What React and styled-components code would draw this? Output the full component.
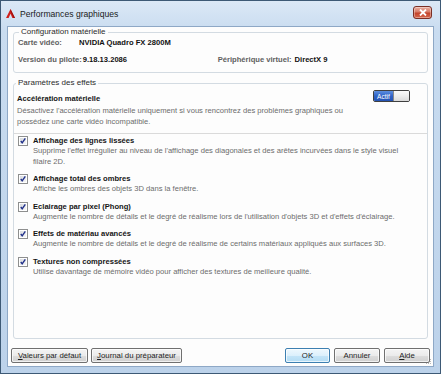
import styled, { createGlobalStyle } from 'styled-components';

const GlobalStyle = createGlobalStyle`
    html, body {
        margin: 0;
        padding: 0;
        background: #ffffff;
    }
    body {
        font-family: "Liberation Sans", Arial, sans-serif;
    }
`;

const Window = styled.div`
    position: relative;
    box-sizing: border-box;
    width: 441px;
    height: 374px;
    display: flex;
    flex-direction: column;
    border: 1px solid #3d5975;
    padding: 0 6px 6px 6px;
    background: linear-gradient(180deg, #dbe8f6 0%, #c9dcf0 8%, #bcd2ea 100%);
`;

const TitleBar = styled.div`
    height: 25px;
    display: flex;
    align-items: center;
    margin: 0 -6px;
    padding: 0 8px 0 5px;
    gap: 5px;
`;

const Title = styled.span`
    flex: 1;
    font-size: 8.6px;
    color: #1b1b1b;
    margin-top: 1px;
`;

const CloseButton = styled.div`
    box-sizing: border-box;
    width: 19px;
    height: 13px;
    margin-top: -2px;
    display: flex;
    align-items: center;
    justify-content: center;
    border: 1px solid #7a2f25;
    border-radius: 3px;
    background: linear-gradient(180deg, #eab0a2 0%, #d77a66 45%, #c2432b 55%, #d7684d 100%);
    box-shadow: inset 0 0 0 1px rgba(255, 255, 255, 0.35);
`;

const Client = styled.div`
    flex: 1;
    display: flex;
    flex-direction: column;
    box-sizing: border-box;
    border: 1px solid #8ea8c6;
    background: #fdfdfd;
    padding: 0 3px 3px 3px;
    font-size: 7.6px;
    color: #1e1e1e;
`;

const GroupBox = styled.fieldset`
    margin: 0 2px;
    padding: ${(p) => p.$pad};
    border: 1px solid #d3dbe2;
    border-radius: 3px;
    min-width: 0;
    display: flex;
    flex-direction: column;
    flex: ${(p) => (p.$grow ? 1 : 'none')};
    & + & {
        margin-top: 5px;
    }
`;

const Legend = styled.legend`
    font-size: 8px;
    line-height: 10px;
    color: #2b2b2b;
    padding: 0 2px;
    margin-left: 1px;
`;

const InfoRow = styled.div`
    display: flex;
    align-items: center;
    line-height: 10px;
    white-space: nowrap;
    & + & {
        margin-top: 7px;
    }
`;

const InfoLabel = styled.span`
    min-width: ${(p) => p.$width || '0'};
    flex: none;
    font-weight: bold;
    color: #606060;
    margin-right: ${(p) => p.$gap || '1px'};
`;

const InfoValue = styled.span`
    width: ${(p) => p.$width || 'auto'};
    flex: none;
    font-weight: bold;
    color: #111;
`;

const AccelBlock = styled.div`
    display: flex;
    align-items: flex-start;
    padding: 0 17px 6px 2px;
    border-bottom: 1px solid #dadada;
    margin: 0 -1px 0 -1px;
`;

const AccelText = styled.div`
    flex: 1;
    padding-left: 1px;
`;

const ItemTitle = styled.div`
    font-weight: bold;
    line-height: 11px;
    color: #151515;
`;

const Desc = styled.div`
    line-height: 10.5px;
    color: #6c6c6c;
    padding-right: 14px;
`;

const AccelDesc = styled(Desc)`
    margin-top: 1px;
    line-height: 11px;
`;

const Toggle = styled.div`
    box-sizing: border-box;
    width: 37px;
    height: 12px;
    margin-top: -3px;
    display: flex;
    border: 1px solid #404040;
    border-radius: 2px;
    overflow: hidden;
`;

const ToggleOn = styled.div`
    width: 19px;
    display: flex;
    align-items: center;
    justify-content: center;
    color: #ffffff;
    font-size: 6.6px;
    background: linear-gradient(180deg, #5d8fe0 0%, #2f62c6 50%, #2453b3 100%);
`;

const ToggleKnob = styled.div`
    flex: 1;
    border-left: 1px solid #8a8a8a;
    background: linear-gradient(180deg, #fafafa 0%, #ececec 50%, #d9d9d9 100%);
`;

const ItemList = styled.div`
    display: flex;
    flex-direction: column;
    gap: 6px;
    padding: 1px 0 0 3px;
`;

const Item = styled.div`
    display: flex;
    gap: 5px;
`;

const CheckSlot = styled.div`
    width: 10px;
    flex: none;
    padding-top: 1px;
`;

const Footer = styled.div`
    display: flex;
    align-items: center;
    gap: 3px;
    margin-top: 9px;
    padding-bottom: 0;
`;

const Spacer = styled.div`
    flex: 1;
`;

const Button = styled.div`
    box-sizing: border-box;
    width: ${(p) => p.$width};
    height: 15px;
    display: flex;
    align-items: center;
    justify-content: center;
    font-size: 7.8px;
    color: #1d1d1d;
    border: 1px solid ${(p) => (p.$default ? '#3c7fb1' : '#707070')};
    border-radius: 2px;
    margin-left: ${(p) => p.$ml || '0'};
    background: ${(p) =>
        p.$default
            ? 'linear-gradient(180deg, #eef8fe 0%, #dcf0fc 50%, #c4e5f8 51%, #b4dcf4 100%)'
            : 'linear-gradient(180deg, #f4f4f4 0%, #ebebeb 50%, #dddddd 51%, #d0d0d0 100%)'};
    box-shadow: inset 0 0 0 1px rgba(255, 255, 255, 0.7);

    u {
        text-decoration: underline;
        text-underline-offset: 1px;
    }
`;

const Grip = styled.svg`
    position: absolute;
    right: 8px;
    bottom: 8px;
`;

const AppIcon = () => (
    <svg width="9" height="9" viewBox="0 0 9 9">
        <polygon points="4.5,0 9,9 6.4,9 4.5,4.8 2.6,9 0,9" fill="#d0201c" />
        <polygon points="4.5,0 9,9 7.6,9 4.5,2.4" fill="#a0100e" />
    </svg>
);

const CloseIcon = () => (
    <svg width="8" height="7" viewBox="0 0 8 7">
        <path d="M1 0.5 L7 6.5 M7 0.5 L1 6.5" stroke="#ffffff" strokeWidth="1.8" />
    </svg>
);

const CheckBox = () => (
    <svg width="10" height="10" viewBox="0 0 10 10">
        <defs>
            <linearGradient id="cbfill" x1="0" y1="0" x2="1" y2="1">
                <stop offset="0" stopColor="#d8dbdf" />
                <stop offset="1" stopColor="#f6f6f6" />
            </linearGradient>
        </defs>
        <rect x="0.5" y="0.5" width="9" height="9" fill="#ffffff" stroke="#8e8f8f" />
        <rect x="2" y="2" width="6" height="6" fill="url(#cbfill)" />
        <path d="M2.8 5 L4.2 6.9 L7.3 2.4" fill="none" stroke="#20308a" strokeWidth="1.4" />
    </svg>
);

const effects = [
    {
        title: 'Affichage des lignes lissées',
        desc: "Supprime l'effet irrégulier au niveau de l'affichage des diagonales et des arêtes incurvées dans le style visuel filaire 2D.",
    },
    {
        title: 'Affichage total des ombres',
        desc: 'Affiche les ombres des objets 3D dans la fenêtre.',
    },
    {
        title: 'Eclairage par pixel (Phong)',
        desc: "Augmente le nombre de détails et le degré de réalisme lors de l'utilisation d'objets 3D et d'effets d'éclairage.",
    },
    {
        title: 'Effets de matériau avancés',
        desc: 'Augmente le nombre de détails et le degré de réalisme de certains matériaux appliqués aux surfaces 3D.',
    },
    {
        title: 'Textures non compressées',
        desc: 'Utilise davantage de mémoire vidéo pour afficher des textures de meilleure qualité.',
    },
];

const App = () => (
    <>
        <GlobalStyle />
        <Window>
            <TitleBar>
                <AppIcon />
                <Title>Performances graphiques</Title>
                <CloseButton>
                    <CloseIcon />
                </CloseButton>
            </TitleBar>
            <Client>
                <GroupBox $pad="1px 4px 7px 4px">
                    <Legend>Configuration matérielle</Legend>
                    <InfoRow>
                        <InfoLabel $width="60px">Carte vidéo:</InfoLabel>
                        <InfoValue>NVIDIA Quadro FX 2800M</InfoValue>
                    </InfoRow>
                    <InfoRow>
                        <InfoLabel $width="60px">Version du pilote:</InfoLabel>
                        <InfoValue $width="135px">9.18.13.2086</InfoValue>
                        <InfoLabel $gap="3px">Périphérique virtuel:</InfoLabel>
                        <InfoValue>DirectX 9</InfoValue>
                    </InfoRow>
                </GroupBox>
                <GroupBox $pad="5px 1px 0 1px" $grow>
                    <Legend>Paramètres des effets</Legend>
                    <AccelBlock>
                        <AccelText>
                            <ItemTitle>Accélération matérielle</ItemTitle>
                            <AccelDesc>
                                Désactivez l'accélération matérielle uniquement si vous rencontrez des
                                problèmes graphiques ou possédez une carte vidéo incompatible.
                            </AccelDesc>
                        </AccelText>
                        <Toggle>
                            <ToggleOn>Actif</ToggleOn>
                            <ToggleKnob />
                        </Toggle>
                    </AccelBlock>
                    <ItemList>
                        {effects.map((e) => (
                            <Item key={e.title}>
                                <CheckSlot>
                                    <CheckBox />
                                </CheckSlot>
                                <div>
                                    <ItemTitle>{e.title}</ItemTitle>
                                    <Desc>{e.desc}</Desc>
                                </div>
                            </Item>
                        ))}
                    </ItemList>
                </GroupBox>
                <Footer>
                    <Button $width="77px">
                        <span>
                            <u>V</u>aleurs par défaut
                        </span>
                    </Button>
                    <Button $width="91px">
                        <span>
                            <u>J</u>ournal du préparateur
                        </span>
                    </Button>
                    <Spacer />
                    <Button $width="45px" $default>
                        OK
                    </Button>
                    <Button $width="46px" $ml="1px">
                        Annuler
                    </Button>
                    <Button $width="46px" $ml="1px">
                        <span>
                            <u>A</u>ide
                        </span>
                    </Button>
                </Footer>
            </Client>
            <Grip width="6" height="6" viewBox="0 0 6 6">
                <g fill="#b8b8b8">
                    <rect x="4" y="0" width="1" height="1" />
                    <rect x="2" y="2" width="1" height="1" />
                    <rect x="4" y="2" width="1" height="1" />
                    <rect x="0" y="4" width="1" height="1" />
                    <rect x="2" y="4" width="1" height="1" />
                    <rect x="4" y="4" width="1" height="1" />
                </g>
            </Grip>
        </Window>
    </>
);

export default App;
